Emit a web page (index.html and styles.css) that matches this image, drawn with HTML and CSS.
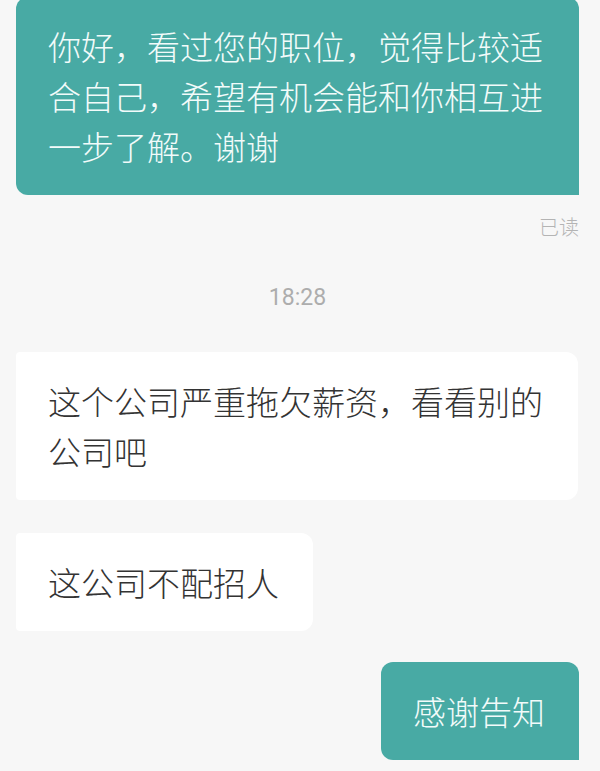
FILE: index.html
```html
<!DOCTYPE html>
<html lang="zh-CN">
<head>
<meta charset="utf-8">
<link rel="stylesheet" href="styles.css">
</head>
<body>
<div class="chat">
  <div class="row row-sent row-first">
    <div class="bubble sent">你好，看过您的职位，觉得比较适合自己，希望有机会能和你相互进一步了解。谢谢</div>
  </div>
  <div class="status">已读</div>
  <div class="time">18:28</div>
  <div class="row row-recv">
    <div class="bubble recv recv-wide">这个公司严重拖欠薪资，看看别的公司吧</div>
  </div>
  <div class="row row-recv row-recv-last">
    <div class="bubble recv">这公司不配招人</div>
  </div>
  <div class="row row-sent">
    <div class="bubble sent">感谢告知</div>
  </div>
</div>
</body>
</html>
```

FILE: styles.css
```css
html, body {
  margin: 0;
  padding: 0;
  background: #f7f7f7;
}
body {
  font-family: "Noto Sans CJK SC", "Noto Sans", sans-serif;
  overflow: hidden;
}
.chat {
  display: flex;
  flex-direction: column;
  padding: 0 21px 0 16px;
}
.row {
  display: flex;
}
.row-sent {
  justify-content: flex-end;
}
.row-recv {
  justify-content: flex-start;
  margin-bottom: 33px;
}
.row-recv-last {
  margin-bottom: 31px;
}
.row-first {
  margin-top: -3px;
}
.bubble {
  font-size: 33px;
  font-weight: 300;
  line-height: 50px;
  padding: 24px 34px 24px 32px;
  box-sizing: border-box;
}
.sent {
  background: #48aaa4;
  color: #f2fbfa;
  border-radius: 12px 12px 0 12px;
}
.row-first .sent {
  width: 563px;
}
.recv {
  background: #ffffff;
  color: #333333;
  border-radius: 4px 12px 12px 4px;
}
.recv-wide {
  width: 562px;
}
.status {
  align-self: flex-end;
  font-size: 20px;
  font-weight: 300;
  line-height: 24px;
  color: #b4b4b4;
  margin-top: 20px;
}
.time {
  align-self: center;
  font-family: Roboto, "Noto Sans", sans-serif;
  font-size: 23px;
  line-height: 26px;
  color: #adadad;
  margin: 46px 0 41px 0;
}
```
